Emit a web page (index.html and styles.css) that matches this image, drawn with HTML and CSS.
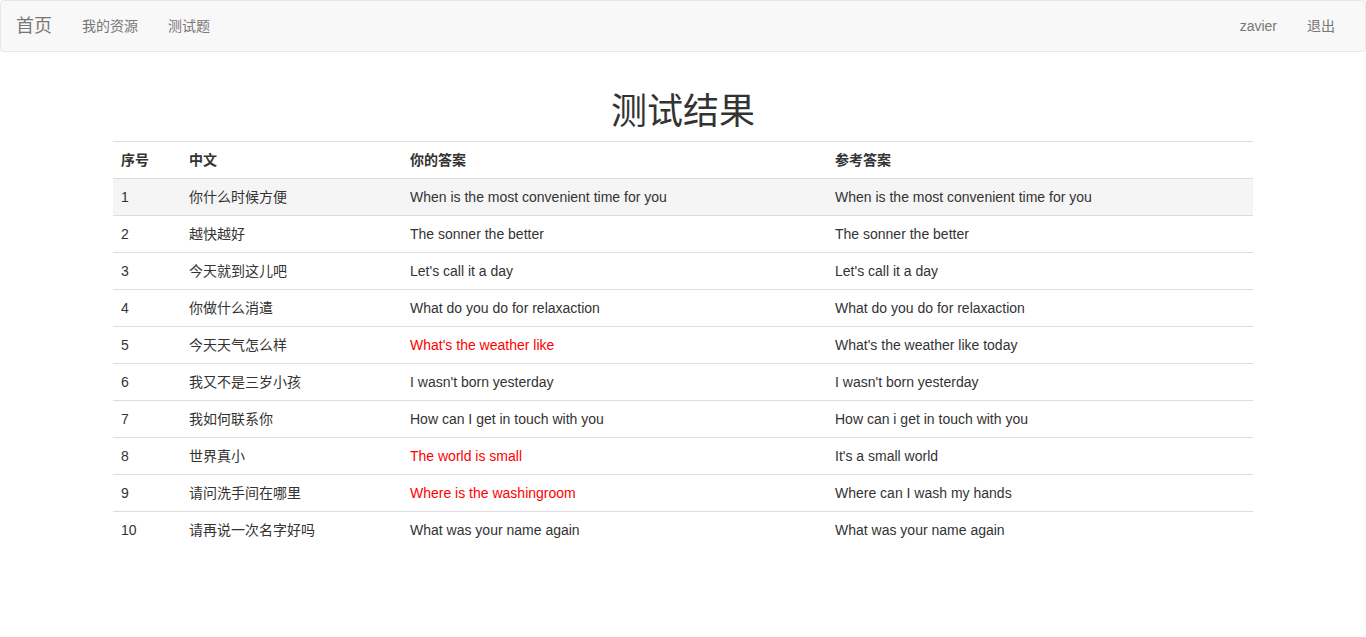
FILE: index.html
```html
<!DOCTYPE html>
<html lang="zh">
<head>
<meta charset="utf-8">
<title>测试结果</title>
<link rel="stylesheet" href="styles.css">
</head>
<body>
<nav class="navbar">
  <div class="nav-left">
    <a class="brand" href="#">首页</a>
    <a class="nav-link" href="#">我的资源</a>
    <a class="nav-link" href="#">测试题</a>
  </div>
  <div class="nav-right">
    <a class="nav-link" href="#">zavier</a>
    <a class="nav-link" href="#">退出</a>
  </div>
</nav>
<main class="container">
  <h1 class="title">测试结果</h1>
  <table class="results">
    <thead>
      <tr><th class="c-no">序号</th><th class="c-cn">中文</th><th class="c-ans">你的答案</th><th class="c-ref">参考答案</th></tr>
    </thead>
    <tbody>
      <tr class="hover"><td>1</td><td>你什么时候方便</td><td>When is the most convenient time for you</td><td>When is the most convenient time for you</td></tr>
      <tr><td>2</td><td>越快越好</td><td>The sonner the better</td><td>The sonner the better</td></tr>
      <tr><td>3</td><td>今天就到这儿吧</td><td>Let's call it a day</td><td>Let's call it a day</td></tr>
      <tr><td>4</td><td>你做什么消遣</td><td>What do you do for relaxaction</td><td>What do you do for relaxaction</td></tr>
      <tr><td>5</td><td>今天天气怎么样</td><td class="wrong">What's the weather like</td><td>What's the weather like today</td></tr>
      <tr><td>6</td><td>我又不是三岁小孩</td><td>I wasn't born yesterday</td><td>I wasn't born yesterday</td></tr>
      <tr><td>7</td><td>我如何联系你</td><td>How can I get in touch with you</td><td>How can i get in touch with you</td></tr>
      <tr><td>8</td><td>世界真小</td><td class="wrong">The world is small</td><td>It's a small world</td></tr>
      <tr><td>9</td><td>请问洗手间在哪里</td><td class="wrong">Where is the washingroom</td><td>Where can I wash my hands</td></tr>
      <tr><td>10</td><td>请再说一次名字好吗</td><td>What was your name again</td><td>What was your name again</td></tr>
    </tbody>
  </table>
</main>
</body>
</html>
```

FILE: styles.css
```css
html, body {
  margin: 0;
  padding: 0;
  background: #fff;
}
body {
  font-family: "Liberation Sans", Arial, "Noto Sans CJK SC", sans-serif;
  font-size: 14px;
  line-height: 20px;
  color: #333;
}
a {
  text-decoration: none;
}
.navbar {
  display: flex;
  justify-content: space-between;
  min-height: 50px;
  background: #f8f8f8;
  border: 1px solid #e7e7e7;
  border-radius: 4px;
  margin-bottom: 20px;
}
.nav-left, .nav-right {
  display: flex;
  align-items: flex-start;
}
.nav-right {
  padding-right: 15px;
}
.brand {
  display: block;
  height: 50px;
  box-sizing: border-box;
  padding: 15px;
  font-size: 18px;
  line-height: 20px;
  color: #777;
}
.nav-link {
  display: block;
  padding: 15px;
  line-height: 20px;
  font-size: 14px;
  color: #777;
}
.container {
  display: flow-root;
  width: 1140px;
  margin: 0 auto;
}
.title {
  margin: 20px 0 10px;
  font-size: 36px;
  line-height: 39px;
  font-weight: normal;
  text-align: center;
  color: #333;
}
.results {
  width: 100%;
  border-collapse: collapse;
  border-spacing: 0;
}
.results th, .results td {
  padding: 8px;
  text-align: left;
  vertical-align: top;
  border-top: 1px solid #ddd;
  line-height: 20px;
}
.results th {
  font-weight: bold;
  font-size: 14px;
}
.c-no { width: 52px; }
.c-cn { width: 205px; }
.c-ans { width: 409px; }
.results tr.hover td {
  background: #f5f5f5;
}
.results td.wrong {
  color: #f00;
}
```
